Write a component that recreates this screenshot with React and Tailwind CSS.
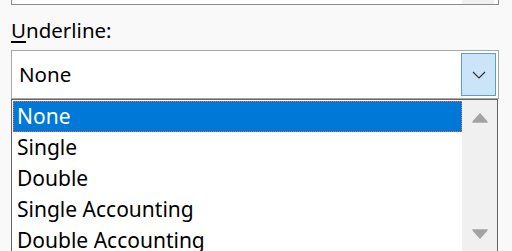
import React from 'react';

const items = ['None', 'Single', 'Double', 'Single Accounting', 'Double Accounting'];

const Triangle = ({ down }) => (
    <svg width="16" height="10" viewBox="0 0 16 10" className="block">
        {down
            ? <path d="M1 1 H15 L8 9 Z" fill="#a3a3a3" stroke="#a3a3a3" strokeLinejoin="round" strokeWidth="1.5" />
            : <path d="M1 9 H15 L8 1 Z" fill="#a3a3a3" stroke="#a3a3a3" strokeLinejoin="round" strokeWidth="1.5" />}
    </svg>
);

const App = () => {
    return (
        <div
            className="w-[512px] h-[251px] overflow-hidden bg-[#f9f9f9] text-black"
            style={{ fontFamily: '"Segoe UI", "Noto Sans", "Open Sans", sans-serif' }}
        >
            {/* tail of the field above */}
            <div className="ml-[11px] w-[488px] h-[5px] bg-white border-x border-b border-[#8a8a8a] flex justify-end pr-[4px]">
                <div className="w-[32px] h-full bg-[#f0f0f0]"></div>
            </div>

            <div className="ml-[11px] mt-[12px] text-[20.5px] leading-[26px]">
                <span className="underline underline-offset-[3px]">U</span>nderline:
            </div>

            {/* combobox */}
            <div className="ml-[11px] mt-[7px] w-[488px] h-[49px] bg-white border border-[#a8a8a8] flex items-center justify-between pl-[7px] pr-[2px]">
                <span className="text-[20.5px] leading-none">None</span>
                <div className="w-[35px] h-[43px] bg-[#cce4f7] border border-[#569de5] flex items-center justify-center">
                    <svg width="14" height="8" viewBox="0 0 14 8">
                        <path d="M1 1 L7 7 L13 1" fill="none" stroke="#333" strokeWidth="1.2" />
                    </svg>
                </div>
            </div>

            {/* dropdown list */}
            <div className="ml-[11px] w-[487px] h-[160px] bg-white border-x border-t border-[#646464] flex">
                <div className="flex-1 pt-[1px] pl-[1px]">
                    {items.map((it, i) => (
                        <div
                            key={it}
                            className={`h-[31px] flex items-center pl-[4px] text-[21px] whitespace-nowrap ${i === 0 ? 'bg-[#0078d7] text-white outline-1 outline-dotted outline-[#e0606f] -outline-offset-1' : ''}`}
                        >
                            {it}
                        </div>
                    ))}
                </div>
                <div className="w-[35px] bg-[#f0f0f0] flex flex-col items-center justify-between pt-[13px] pb-[20px]">
                    <Triangle />
                    <Triangle down />
                </div>
            </div>
        </div>
    );
};

export default App;
